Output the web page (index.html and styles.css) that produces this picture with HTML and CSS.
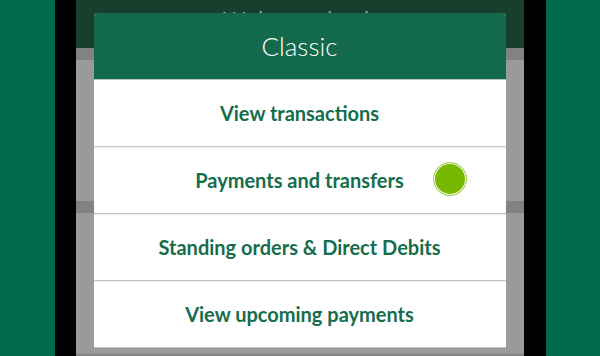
FILE: index.html
```html
<!DOCTYPE html>
<html lang="en">
<head>
<meta charset="utf-8">
<title>Classic</title>
<link rel="stylesheet" href="styles.css">
</head>
<body>
<div class="page">
  <div class="side"></div>
  <div class="phone">
    <div class="screen">
      <div class="app-header"><div class="title-clip"><span class="app-title">Welcome back</span></div></div>
      <div class="band"></div>
      <div class="block"></div>
      <div class="band"></div>
      <div class="block"></div>
      <div class="band"></div>

      <div class="modal">
        <div class="modal-head">Classic</div>
        <ul class="menu">
          <li class="item">View transactions</li>
          <li class="item">Payments and transfers<span class="dot"></span></li>
          <li class="item">Standing orders &amp; Direct Debits</li>
          <li class="item">View upcoming payments</li>
        </ul>
      </div>
    </div>
  </div>
  <div class="side"></div>
</div>
</body>
</html>
```

FILE: styles.css
```css
html, body {
  margin: 0;
  padding: 0;
}
body {
  width: 600px;
  height: 356px;
  overflow: hidden;
  font-family: Lato, "Open Sans", sans-serif;
}
.page {
  display: flex;
  height: 356px;
}
.side {
  flex: 1;
  background: #006a4d;
}
.phone {
  width: 448px;
  border-left: 21px solid #000;
  border-right: 22px solid #000;
  flex: none;
}
.screen {
  position: relative;
  height: 356px;
  overflow: hidden;
  display: flex;
  flex-direction: column;
  background: #9a9a9a;
}
.app-header {
  height: 48px;
  flex: none;
  background: #163f2e;
  display: flex;
  justify-content: center;
  align-items: flex-start;
  padding-top: 8px;
  box-sizing: border-box;
}
.title-clip {
  height: 5px;
  overflow: hidden;
}
.app-title {
  display: block;
  color: #9aa7a1;
  font-size: 22px;
  line-height: 22px;
  letter-spacing: 1px;
}
.band {
  height: 12px;
  flex: none;
  background: #828282;
}
.block {
  height: 141px;
  flex: none;
  background: #9a9a9a;
}
.modal {
  position: absolute;
  top: 13px;
  left: 18px;
  width: 412px;
  background: #fff;
  border-radius: 4px 4px 0 0;
  overflow: hidden;
}
.modal-head {
  height: 67px;
  background: #13694b;
  border-bottom: 1px solid #b9c4bf;
  box-sizing: border-box;
  color: #fff;
  font-size: 26px;
  font-weight: 300;
  display: flex;
  align-items: center;
  justify-content: center;
  padding-bottom: 1px;
}
.menu {
  list-style: none;
  margin: 0;
  padding: 0;
}
.item {
  position: relative;
  height: 67px;
  box-sizing: border-box;
  border-bottom: 1px solid #c4c4c4;
  box-shadow: 0 1px 0 #ececec;
  display: flex;
  align-items: center;
  justify-content: center;
  color: #156d4c;
  font-size: 20px;
  font-weight: 700;
}
.dot {
  position: absolute;
  left: 339px;
  top: 15px;
  width: 34px;
  height: 34px;
  box-sizing: border-box;
  border-radius: 50%;
  background: #77b900;
  border: 1px solid #a7d45a;
  box-shadow: inset 0 0 0 1px #fff;
}
```
